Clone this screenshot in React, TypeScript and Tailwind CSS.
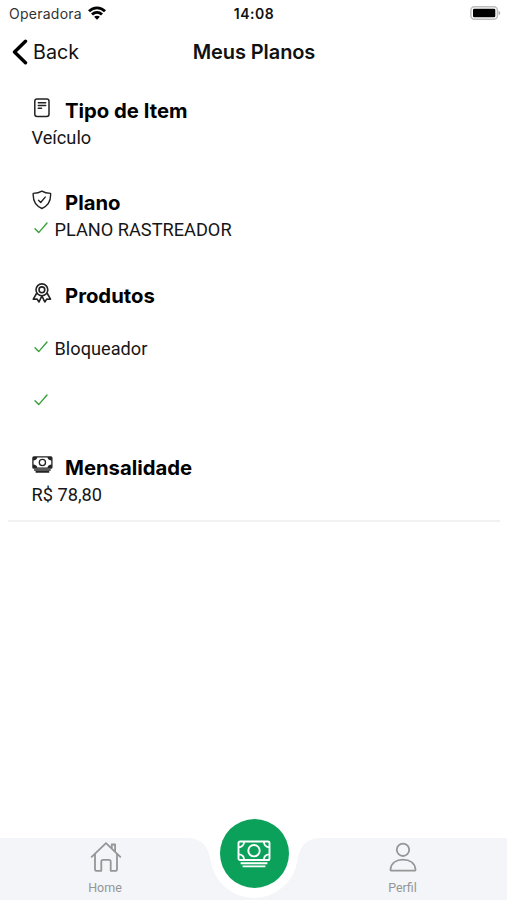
import type { ReactNode } from "react";

const HEADING = "font-['Inter',sans-serif] text-[20.3px] leading-[28px] font-bold text-black";
const BODY = "font-['Roboto',sans-serif] text-[18.2px] leading-[26px] text-[#161616]";

function CashIcon() {
  return (
    <svg viewBox="0 0 34 28" className="h-7 w-[34px]" fill="none" stroke="currentColor" strokeWidth="1.9">
      <rect x="1.5" y="1.5" width="31" height="18.5" rx="1.6" />
      <circle cx="17" cy="10.7" r="5.7" />
      <path d="M1.5 7.2c3.4 0 5.6-2.3 5.6-5.7M32.5 7.2c-3.4 0-5.6-2.3-5.6-5.7M1.5 14.4c3.4 0 5.6 2.2 5.6 5.6M32.5 14.4c-3.4 0-5.6 2.2-5.6 5.6" />
      <path d="M3.6 23.2h26.8M5.6 26.4h22.8" />
    </svg>
  );
}

// Heavier variant of the cash icon for the section title
function SmallCashIcon() {
  return (
    <svg viewBox="0 0 21 17" className="-mt-0.5 h-[17px] w-[21px]" fill="none" stroke="#222" strokeWidth="1.3">
      <rect x="0.9" y="0.9" width="19" height="11.3" rx="1" />
      <circle cx="10.4" cy="6.5" r="3.1" />
      <path
        d="M1 1h4.3c0 2-1.7 3.5-4.3 3.5zM19.8 1h-4.3c0 2 1.7 3.5 4.3 3.5zM1 12.1h4.3c0-2-1.7-3.5-4.3-3.5zM19.8 12.1h-4.3c0-2 1.7-3.5 4.3-3.5z"
        fill="#222"
        stroke="none"
      />
      <path d="M2.1 14h16.6M3.6 15.9h13.6" strokeWidth="1.6" />
    </svg>
  );
}

function DocumentIcon() {
  return (
    <svg viewBox="0 0 20 20" className="h-5 w-5" fill="none" stroke="#222" strokeWidth="1.5" strokeLinecap="round">
      <rect x="2.8" y="1.1" width="14.2" height="17.4" rx="2.2" />
      <path d="M6.3 4.7h7.4M6.3 7.5h7.4M6.3 10.3h3.2" />
    </svg>
  );
}

function ShieldIcon() {
  return (
    <svg viewBox="0 0 20 20" className="-mt-px h-5 w-5" fill="none" stroke="#222" strokeWidth="1.4" strokeLinecap="round" strokeLinejoin="round">
      <path d="M9.9 1.2C7.6 2.6 4.5 3.3 1.2 3.4.8 10.2 3.4 15.8 9.9 18.5c6.5-2.7 9.1-8.3 8.7-15.1C15.3 3.3 12.2 2.6 9.9 1.2z" />
      <path d="M6.5 10.3l2.2 2.2 4.5-5.4" />
    </svg>
  );
}

function RibbonIcon() {
  return (
    <svg viewBox="0 0 20 20" className="h-5 w-5" fill="none" stroke="#222" strokeWidth="1.6" strokeLinejoin="round">
      <circle cx="9.9" cy="6.8" r="5.9" />
      <circle cx="9.9" cy="6.8" r="2.9" />
      <path d="M4.8 10L1.3 16.2l3.8-.1L7 19l2.9-6.2L12.800 19l1.900-2.900 3.800.1L15 10" />
    </svg>
  );
}

function CheckIcon() {
  return (
    <svg viewBox="0 0 14 12" className="h-3 w-3.5" fill="none" stroke="#38a038" strokeWidth="1.4" strokeLinecap="round" strokeLinejoin="round">
      <path d="M1 6.7l3.7 3.9L13 1" />
    </svg>
  );
}

function StatusBar() {
  return (
    <div className="grid h-[27px] grid-cols-3 items-center pr-[6px] pl-[9px] font-['Inter',sans-serif]">
      <div className="flex items-center gap-[6px]">
        <span className="text-[14px] tracking-[0.25px] text-[#333]">Operadora</span>
        <svg viewBox="0 0 18 14" className="h-[14px] w-[18px] -translate-y-px" fill="none" stroke="#000" strokeWidth="2.8">
          <path d="M1 5.3c4.6-4.6 11.400-4.600 16 0M4 8.600c2.900-2.800 7.100-2.800 10 0" />
          <path d="M9 13.700l-2.900-2.900c1.600-1.500 4.200-1.500 5.800 0z" fill="#000" stroke="none" />
        </svg>
      </div>
      <span className="-ml-0.5 text-center text-[14px] font-semibold tracking-[0.5px] text-[#111]">14:08</span>
      <svg viewBox="0 0 31 16" className="h-4 w-[31px] -translate-y-px justify-self-end">
        <rect x="0.9" y="1.7" width="26.5" height="12.6" rx="3.5" fill="#fff" stroke="#bdbdbd" strokeWidth="1.5" />
        <rect x="3" y="3.7" width="22.3" height="8.6" rx="1.2" fill="#000" />
        <path d="M28.600 5.800c2.200.8 2.200 3.600 0 4.400z" fill="#aaa" />
      </svg>
    </div>
  );
}

function Header() {
  return (
    <header className="grid h-[50px] grid-cols-3 items-center px-3 font-['Inter',sans-serif]">
      <div className="flex items-center gap-[5px]">
        <svg viewBox="0 0 16 26" className="h-[26px] w-4" fill="none" stroke="#000" strokeWidth="3.4" strokeLinecap="round" strokeLinejoin="round">
          <path d="M13.5 2.3L2.5 13l11 10.7" />
        </svg>
        <span className="pt-0.5 text-[19.7px] text-[#111]">Back</span>
      </div>
      <h1 className="pl-px text-center text-[20px] font-semibold tracking-[-0.1px] whitespace-nowrap text-[#111]">Meus Planos</h1>
    </header>
  );
}

function SectionTitle({ icon, children }: { icon: ReactNode; children: ReactNode }) {
  return (
    <div className="flex items-start">
      <div className="flex h-[22px] w-[33.5px] items-center">{icon}</div>
      <h2 className={HEADING}>{children}</h2>
    </div>
  );
}

function CheckedLine({ children }: { children?: ReactNode }) {
  return (
    <div className="flex h-[26px] items-start pl-0.5">
      <div className="flex h-[21px] w-[21px] items-center">
        <CheckIcon />
      </div>
      <span className={BODY}>{children}</span>
    </div>
  );
}

function TabBar() {
  return (
    <nav className="relative h-[81px] font-['Roboto',sans-serif] text-[12.5px] leading-4 text-[#969696]">
      <svg viewBox="0 0 507 62" className="absolute bottom-0 left-0 h-[62px] w-full">
        <path d="M0 0H186C202 0 208 8 210.5 22.500A44 44 0 0 0 297.500 22.500C300 8 306 0 322 0H507V62H0z" fill="#f3f5f9" />
      </svg>
      <div className="relative grid h-full grid-cols-[210px_88px_209px]">
        <div className="flex flex-col items-center pt-[23px]">
          <svg viewBox="0 0 32 30" className="ml-0.5 h-[30px] w-8" fill="none" stroke="#969696" strokeWidth="1.8" strokeLinecap="round" strokeLinejoin="round">
            <path d="M1.7 14.8L16 1.2l14.3 13.6M21.8 6.2V2.5h3.3v7M5 12.2v15.3c0 .9.4 1.3 1.3 1.3h5V19.5c0-1.1.6-1.7 1.7-1.7h6c1.1 0 1.7.6 1.7 1.7v9.3h5c.9 0 1.3-.4 1.3-1.3V12.2" />
          </svg>
          <span className="mt-[7.5px]">Home</span>
        </div>
        <div className="flex justify-center">
          <div className="flex h-[69px] w-[69px] items-center justify-center rounded-full bg-[#0ca15a] text-white">
            <CashIcon />
          </div>
        </div>
        <div className="flex flex-col items-center pt-[23px]">
          <svg viewBox="0 0 28 30" className="h-[30px] w-7" fill="none" stroke="#969696" strokeWidth="1.8" strokeLinejoin="round">
            <circle cx="14" cy="7.8" r="6.2" />
            <path d="M2.7 28.7c-.9 0-1.3-.5-1.2-1.4.7-6.1 5.7-9.700 12.500-9.700s11.800 3.600 12.500 9.700c.1.900-.3 1.400-1.200 1.400z" />
          </svg>
          <span className="mt-[7.5px]">Perfil</span>
        </div>
      </div>
    </nav>
  );
}

export default function App() {
  return (
    <div className="flex h-[900px] w-[507px] flex-col overflow-hidden bg-white">
      <StatusBar />
      <Header />
      <main className="mr-[7px] ml-2 flex flex-1 flex-col">
        <div className="flex flex-col border-b-2 border-[#f1f1f1] pt-5 pr-6 pb-[12px] pl-[23.5px]">
          <section className="h-[92px]">
            <SectionTitle icon={<DocumentIcon />}>Tipo de Item</SectionTitle>
            <p className={BODY}>Veículo</p>
          </section>
          <section className="h-[93px]">
            <SectionTitle icon={<ShieldIcon />}>Plano</SectionTitle>
            <CheckedLine>PLANO RASTREADOR</CheckedLine>
          </section>
          <section className="h-[172px]">
            <SectionTitle icon={<RibbonIcon />}>Produtos</SectionTitle>
            <div className="mt-[26px] flex flex-col gap-[27px]">
              <CheckedLine>Bloqueador</CheckedLine>
              <CheckedLine />
            </div>
          </section>
          <section>
            <SectionTitle icon={<SmallCashIcon />}>Mensalidade</SectionTitle>
            <p className={BODY}>R$ 78,80</p>
          </section>
        </div>
      </main>
      <TabBar />
    </div>
  );
}
